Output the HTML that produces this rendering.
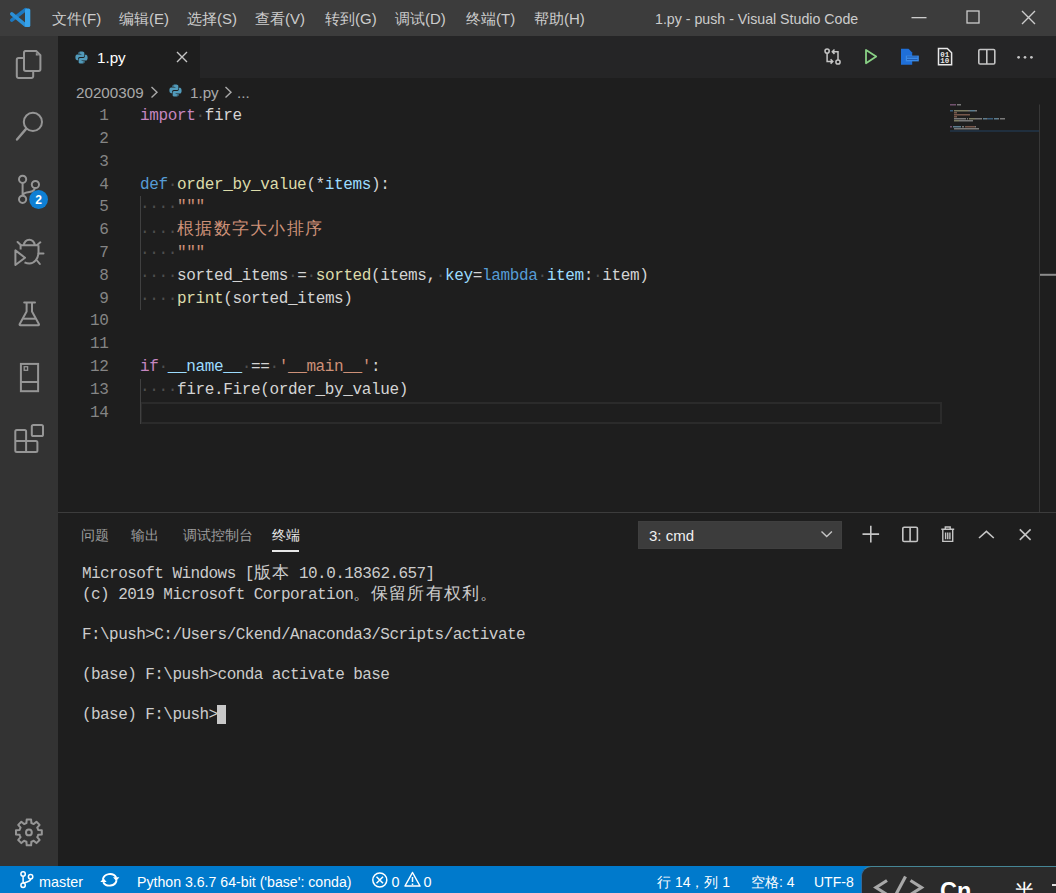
<!DOCTYPE html><html><head><meta charset="utf-8"><style>
*{margin:0;padding:0;box-sizing:border-box}
html,body{width:1056px;height:893px;overflow:hidden;background:#1e1e1e;font-family:"Liberation Sans",sans-serif}
div,span{position:absolute;white-space:pre}
span{position:static}
svg{position:absolute;overflow:visible}
.code{font-family:"Liberation Mono",monospace;font-size:16px;letter-spacing:-0.36px;line-height:22.8px;color:#d4d4d4;left:140px;height:22.8px}
.ln{font-family:"Liberation Mono",monospace;font-size:16px;letter-spacing:-0.36px;line-height:22.8px;color:#858585;text-align:right;left:58px;width:50.4px}
.term{font-family:"Liberation Mono",monospace;font-size:16px;letter-spacing:-0.56px;line-height:20.1px;color:#cccccc;left:82px}
.kw{color:#c586c0}.df{color:#569cd6}.fn{color:#dcdcaa}.st{color:#ce9178}.vr{color:#9cdcfe}.ws{color:#4e4e4e}.op{color:#d4d4d4}
.cj{font-family:"Liberation Sans",sans-serif;font-size:16.5px;letter-spacing:1.3px;position:relative;top:-2px}
.tcj{font-family:"Liberation Sans",sans-serif;font-size:16.5px;letter-spacing:1.08px;line-height:10px}
</style></head><body>
<div style="left:0;top:0;width:1056px;height:36px;background:#3c3c3c"></div>
<svg style="left:0;top:0" width="40" height="36">
<path d="M11.8 20.2 L25.5 9.6" stroke="#1c78c0" stroke-width="3.6" stroke-linecap="round"/>
<path d="M11.8 13.8 L25.5 25.2" stroke="#2b8fd6" stroke-width="3.6" stroke-linecap="round"/>
<rect x="25" y="8.4" width="5.3" height="18.7" rx="1.6" fill="#37a3ec"/>
</svg>
<div style="left:52px;top:8px;font-size:15px;line-height:22px;color:#cccccc">文件(F)</div>
<div style="left:119px;top:8px;font-size:15px;line-height:22px;color:#cccccc">编辑(E)</div>
<div style="left:187px;top:8px;font-size:15px;line-height:22px;color:#cccccc">选择(S)</div>
<div style="left:255px;top:8px;font-size:15px;line-height:22px;color:#cccccc">查看(V)</div>
<div style="left:325px;top:8px;font-size:15px;line-height:22px;color:#cccccc">转到(G)</div>
<div style="left:395px;top:8px;font-size:15px;line-height:22px;color:#cccccc">调试(D)</div>
<div style="left:466px;top:8px;font-size:15px;line-height:22px;color:#cccccc">终端(T)</div>
<div style="left:534px;top:8px;font-size:15px;line-height:22px;color:#cccccc">帮助(H)</div>
<div style="left:655px;top:8px;font-size:14.2px;line-height:22px;color:#cccccc">1.py - push - Visual Studio Code</div>
<svg style="left:911px;top:17px" width="16" height="2"><rect x="0.5" y="0" width="15" height="1.3" fill="#cccccc"/></svg>
<svg style="left:966px;top:10px" width="14" height="14"><rect x="1" y="1" width="12" height="12" fill="none" stroke="#cccccc" stroke-width="1.3"/></svg>
<svg style="left:1021px;top:10px" width="15" height="15"><path d="M1 1 14 14M14 1 1 14" stroke="#cccccc" stroke-width="1.4"/></svg>
<div style="left:0;top:36px;width:58px;height:830px;background:#333333"></div>
<svg style="left:0;top:0" width="58" height="500">
<path d="M25 51 H36.2 L40.4 55.2 V69.2 A1.8 1.8 0 0 1 38.6 71 H25.8 A1.8 1.8 0 0 1 24 69.2 V52.8 A1.8 1.8 0 0 1 25.8 51 Z" fill="none" stroke="#969696" stroke-width="2" stroke-linejoin="round"/>
<path d="M24 58 H18.6 A1.8 1.8 0 0 0 16.8 59.8 V76.2 A1.8 1.8 0 0 0 18.6 78 H31.4 A1.8 1.8 0 0 0 33.2 76.2 V71" fill="none" stroke="#969696" stroke-width="2" stroke-linejoin="round"/>
<path d="M35.8 52.5 V55.6 H39 Z" fill="#969696"/>
</svg>
<svg style="left:0;top:0" width="58" height="500">
<circle cx="32.9" cy="121.9" r="9.1" fill="none" stroke="#969696" stroke-width="2"/>
<path d="M26.3 128.6 L17 139.5" stroke="#969696" stroke-width="2.4" stroke-linecap="round"/>
</svg>
<svg style="left:0;top:0" width="58" height="500">
<circle cx="22.6" cy="179.3" r="3.6" fill="none" stroke="#969696" stroke-width="2"/>
<circle cx="35.4" cy="184.5" r="3.6" fill="none" stroke="#969696" stroke-width="2"/>
<circle cx="22.6" cy="199.3" r="3.6" fill="none" stroke="#969696" stroke-width="2"/>
<path d="M22.6 182.9 V195.7 M35 188.1 C34 191 32 192 28 192.2 C25 192.4 23.5 193 22.8 195.5" fill="none" stroke="#969696" stroke-width="2"/>
<circle cx="38.6" cy="199.5" r="9.4" fill="#0e7fd4"/>
<text x="38.6" y="204" font-family="Liberation Sans" font-weight="bold" font-size="12" fill="#ffffff" text-anchor="middle">2</text>
</svg>
<svg style="left:0;top:0" width="58" height="500">
<path d="M15.4 250.4 V265 L25 257.7 Z" fill="none" stroke="#969696" stroke-width="2" stroke-linejoin="round"/>
<path d="M24 245 A5.3 5.3 0 0 1 34.6 245" fill="none" stroke="#969696" stroke-width="2"/>
<path d="M19.8 245.2 H38.5 M20.6 245.2 V249.5 M38.5 245.2 V252 C38.5 259 34 263.5 29.5 263.5 C27.5 263.5 26 263 24.5 262.3" fill="none" stroke="#969696" stroke-width="2"/>
<path d="M17.6 242 L20.5 244.7 M40.3 242.3 L37.5 244.7 M38.5 253.4 H43.5 M37 260.5 L39.8 264" fill="none" stroke="#969696" stroke-width="2" stroke-linecap="round"/>
</svg>
<svg style="left:0;top:0" width="58" height="500">
<path d="M24.2 302.5 H35" stroke="#969696" stroke-width="2" stroke-linecap="round"/>
<path d="M26.6 302.5 V311.6 L19.6 324.2 A0.8 0.8 0 0 0 20.3 325.3 H38.3 A0.8 0.8 0 0 0 39 324.2 L32 311.6 V302.5" fill="none" stroke="#969696" stroke-width="2" stroke-linejoin="round"/>
<path d="M23.2 318.7 H35.6" stroke="#969696" stroke-width="2"/>
</svg>
<svg style="left:0;top:0" width="58" height="500">
<rect x="20.9" y="363.9" width="17.2" height="27.3" fill="none" stroke="#969696" stroke-width="2"/>
<path d="M20.9 382 H38.1" stroke="#969696" stroke-width="2"/>
<rect x="24.2" y="366.7" width="3.4" height="3.6" fill="none" stroke="#969696" stroke-width="1.3"/>
</svg>
<svg style="left:0;top:0" width="58" height="500">
<path d="M26.1 440.9 V431.4 A1.5 1.5 0 0 0 24.6 429.9 H16.8 A1.5 1.5 0 0 0 15.3 431.4 V450.5 A1.5 1.5 0 0 0 16.8 452 H35.9 A1.5 1.5 0 0 0 37.4 450.5 V442.4 A1.5 1.5 0 0 0 35.9 440.9 Z M15.3 440.9 H26.1 V452" fill="none" stroke="#969696" stroke-width="2" stroke-linejoin="round"/>
<rect x="31.8" y="424.9" width="11.2" height="11.1" rx="1.6" fill="none" stroke="#969696" stroke-width="2"/>
</svg>
<svg style="left:0;top:0" width="58" height="893">
<path d="M25.23 823.53 L26.43 823.12 L26.68 819.49 L31.12 819.49 L31.37 823.12 L32.57 823.53 L33.71 824.09 L36.46 821.70 L39.60 824.84 L37.21 827.59 L37.77 828.73 L38.18 829.93 L41.81 830.18 L41.81 834.62 L38.18 834.87 L37.77 836.07 L37.21 837.21 L39.60 839.96 L36.46 843.10 L33.71 840.71 L32.57 841.27 L31.37 841.68 L31.12 845.31 L26.68 845.31 L26.43 841.68 L25.23 841.27 L24.09 840.71 L21.34 843.10 L18.20 839.96 L20.59 837.21 L20.03 836.07 L19.62 834.87 L15.99 834.62 L15.99 830.18 L19.62 829.93 L20.03 828.73 L20.59 827.59 L18.20 824.84 L21.34 821.70 L24.09 824.09Z" fill="none" stroke="#969696" stroke-width="2" stroke-linejoin="round"/>
<circle cx="28.9" cy="832.4" r="2.9" fill="none" stroke="#969696" stroke-width="2"/>
</svg>
<div style="left:58px;top:36px;width:998px;height:42px;background:#252526"></div>
<div style="left:58px;top:36px;width:142px;height:42px;background:#1e1e1e"></div>
<svg style="left:75px;top:51px" width="13" height="13" viewBox="0 0 16 16">
<path fill="#519aba" d="M7.8 0.5c-3.7 0-3.5 1.6-3.5 1.6v1.7h3.6v0.5H2.9S0.5 4 0.5 7.8c0 3.7 2.1 3.6 2.1 3.6h1.3V9.6s-0.1-2.1 2.1-2.1h3.5s2 0 2-2V2.5S11.8 0.5 7.8 0.5zM5.8 1.7a0.65 0.65 0 1 1 0 1.3 0.65 0.65 0 0 1 0-1.3z"/>
<path fill="#519aba" d="M8.2 15.5c3.7 0 3.5-1.6 3.5-1.6v-1.7H8.1v-0.5h5S15.5 12 15.5 8.2c0-3.7-2.1-3.6-2.1-3.6h-1.3v1.8s0.1 2.1-2.1 2.1H6.5s-2 0-2 2v3.2S4.2 15.5 8.2 15.5zM10.2 14.3a0.65 0.65 0 1 1 0-1.3 0.65 0.65 0 0 1 0 1.3z"/>
</svg>
<div style="left:97px;top:47px;font-size:15.2px;line-height:22px;color:#ffffff">1.py</div>
<svg style="left:176px;top:51px" width="12" height="12"><path d="M1 1 11 11M11 1 1 11" stroke="#c5c5c5" stroke-width="1.4"/></svg>
<svg style="left:0;top:0" width="1056" height="80">
<g fill="none" stroke="#c5c5c5" stroke-width="1.5">
<circle cx="827.1" cy="51.1" r="2.1"/><circle cx="838" cy="62" r="2.1"/>
<path d="M827.1 53.2 V61.4 H832.6 M830.6 59.2 L832.8 61.4 L830.6 63.6"/>
<path d="M838 59.9 V51.7 H832.5 M834.5 49.5 L832.3 51.7 L834.5 53.9"/>
</g>
<path d="M866 49.9 L876.2 56.5 L866 63.2 Z" fill="none" stroke="#89d185" stroke-width="1.8" stroke-linejoin="round"/>
<path d="M901 48.7 H908.5 L912.2 52.4 V64.7 H901 Z" fill="#1f6fd8"/>
<rect x="905.8" y="55.6" width="13" height="5.8" fill="#3a8ae8"/>
<path d="M907 57 H917.5 M907 59.5 H917.5" stroke="#1a4fa0" stroke-width="0.8"/>
<path d="M938.5 48.4 H947.3 L951.6 52.7 V64.7 H938.5 Z" fill="none" stroke="#e8e8e8" stroke-width="1.5"/>
<text x="940.2" y="56.6" font-family="Liberation Mono" font-size="7.6" font-weight="bold" fill="#e8e8e8" textLength="9" lengthAdjust="spacingAndGlyphs">01</text>
<text x="940.2" y="62.6" font-family="Liberation Mono" font-size="7.6" font-weight="bold" fill="#e8e8e8" textLength="9" lengthAdjust="spacingAndGlyphs">10</text>
<rect x="978.8" y="49.5" width="16" height="14.5" rx="1.3" fill="none" stroke="#c5c5c5" stroke-width="1.6"/>
<path d="M986.8 49.5 V64" stroke="#c5c5c5" stroke-width="1.6"/>
<circle cx="1018.6" cy="57.3" r="1.35" fill="#c5c5c5"/><circle cx="1025" cy="57.3" r="1.35" fill="#c5c5c5"/><circle cx="1031.4" cy="57.3" r="1.35" fill="#c5c5c5"/>
</svg>
<div style="left:76px;top:81.5px;font-size:15.2px;line-height:22px;color:#a9a9a9">20200309</div>
<svg style="left:150px;top:86px" width="9" height="13"><path d="M1.5 1 L7 6.2 L1.5 11.5" fill="none" stroke="#a9a9a9" stroke-width="1.4"/></svg>
<svg style="left:169px;top:84px" width="13" height="13" viewBox="0 0 16 16">
<path fill="#519aba" d="M7.8 0.5c-3.7 0-3.5 1.6-3.5 1.6v1.7h3.6v0.5H2.9S0.5 4 0.5 7.8c0 3.7 2.1 3.6 2.1 3.6h1.3V9.6s-0.1-2.1 2.1-2.1h3.5s2 0 2-2V2.5S11.8 0.5 7.8 0.5zM5.8 1.7a0.65 0.65 0 1 1 0 1.3 0.65 0.65 0 0 1 0-1.3z"/>
<path fill="#519aba" d="M8.2 15.5c3.7 0 3.5-1.6 3.5-1.6v-1.7H8.1v-0.5h5S15.5 12 15.5 8.2c0-3.7-2.1-3.6-2.1-3.6h-1.3v1.8s0.1 2.1-2.1 2.1H6.5s-2 0-2 2v3.2S4.2 15.5 8.2 15.5zM10.2 14.3a0.65 0.65 0 1 1 0-1.3 0.65 0.65 0 0 1 0 1.3z"/>
</svg>
<div style="left:190px;top:81.5px;font-size:15.2px;line-height:22px;color:#a9a9a9">1.py</div>
<svg style="left:224px;top:86px" width="9" height="13"><path d="M1.5 1 L7 6.2 L1.5 11.5" fill="none" stroke="#a9a9a9" stroke-width="1.4"/></svg>
<div style="left:237px;top:81.5px;font-size:15.2px;line-height:22px;color:#a9a9a9">...</div>
<div style="left:140px;top:401.6px;width:802px;height:22.8px;border:2px solid #2b2b2b"></div>
<div style="left:140px;top:196.4px;width:1px;height:114.0px;background:#404040"></div>
<div style="left:140px;top:378.8px;width:1px;height:45.6px;background:#404040"></div>
<div class="ln" style="top:105.2px">1</div>
<div class="code" style="top:105.2px"><span class="kw">import</span><span class="ws">·</span>fire</div>
<div class="ln" style="top:128.0px">2</div>
<div class="ln" style="top:150.8px">3</div>
<div class="ln" style="top:173.6px">4</div>
<div class="code" style="top:173.6px"><span class="df">def</span><span class="ws">·</span><span class="fn">order_by_value</span>(*<span class="vr">items</span>):</div>
<div class="ln" style="top:196.4px">5</div>
<div class="code" style="top:196.4px"><span class="ws">·</span><span class="ws">·</span><span class="ws">·</span><span class="ws">·</span><span class="st">"""</span></div>
<div class="ln" style="top:219.2px">6</div>
<div class="code" style="top:219.2px"><span class="ws">·</span><span class="ws">·</span><span class="ws">·</span><span class="ws">·</span><span class="st cj">根据数字大小排序</span></div>
<div class="ln" style="top:242.0px">7</div>
<div class="code" style="top:242.0px"><span class="ws">·</span><span class="ws">·</span><span class="ws">·</span><span class="ws">·</span><span class="st">"""</span></div>
<div class="ln" style="top:264.8px">8</div>
<div class="code" style="top:264.8px"><span class="ws">·</span><span class="ws">·</span><span class="ws">·</span><span class="ws">·</span>sorted_items<span class="ws">·</span>=<span class="ws">·</span><span class="fn">sorted</span>(items,<span class="ws">·</span><span class="vr">key</span>=<span class="df">lambda</span><span class="ws">·</span><span class="vr">item</span>:<span class="ws">·</span>item)</div>
<div class="ln" style="top:287.6px">9</div>
<div class="code" style="top:287.6px"><span class="ws">·</span><span class="ws">·</span><span class="ws">·</span><span class="ws">·</span><span class="fn">print</span>(sorted_items)</div>
<div class="ln" style="top:310.4px">10</div>
<div class="ln" style="top:333.2px">11</div>
<div class="ln" style="top:356.0px">12</div>
<div class="code" style="top:356.0px"><span class="kw">if</span><span class="ws">·</span><span class="vr">__name__</span><span class="ws">·</span>==<span class="ws">·</span><span class="st">'__main__'</span>:</div>
<div class="ln" style="top:378.8px">13</div>
<div class="code" style="top:378.8px"><span class="ws">·</span><span class="ws">·</span><span class="ws">·</span><span class="ws">·</span>fire.Fire(order_by_value)</div>
<div class="ln" style="top:401.6px">14</div>
<svg style="left:0;top:0" width="1056" height="520"><rect x="950" y="130.2" width="89.5" height="1.6" fill="#264f78" opacity="0.45"/><g opacity="0.5"><rect x="950" y="104.0" width="6" height="1.5" fill="#c586c0"/><rect x="957" y="104.0" width="4" height="1.5" fill="#d4d4d4"/><rect x="950" y="110.0" width="3" height="1.5" fill="#569cd6"/><rect x="954" y="110.0" width="14" height="1.5" fill="#dcdcaa"/><rect x="968" y="110.0" width="2" height="1.5" fill="#d4d4d4"/><rect x="970" y="110.0" width="5" height="1.5" fill="#9cdcfe"/><rect x="975" y="110.0" width="2" height="1.5" fill="#d4d4d4"/><rect x="954" y="112.0" width="3" height="1.5" fill="#ce9178"/><rect x="954" y="114.0" width="16" height="1.5" fill="#ce9178"/><rect x="954" y="116.0" width="3" height="1.5" fill="#ce9178"/><rect x="954" y="118.0" width="12" height="1.5" fill="#d4d4d4"/><rect x="967" y="118.0" width="1" height="1.5" fill="#d4d4d4"/><rect x="969" y="118.0" width="6" height="1.5" fill="#dcdcaa"/><rect x="975" y="118.0" width="7" height="1.5" fill="#d4d4d4"/><rect x="983" y="118.0" width="3" height="1.5" fill="#9cdcfe"/><rect x="986" y="118.0" width="1" height="1.5" fill="#d4d4d4"/><rect x="987" y="118.0" width="6" height="1.5" fill="#569cd6"/><rect x="994" y="118.0" width="4" height="1.5" fill="#9cdcfe"/><rect x="998" y="118.0" width="1" height="1.5" fill="#d4d4d4"/><rect x="1000" y="118.0" width="5" height="1.5" fill="#d4d4d4"/><rect x="954" y="120.0" width="5" height="1.5" fill="#dcdcaa"/><rect x="959" y="120.0" width="14" height="1.5" fill="#d4d4d4"/><rect x="950" y="126.0" width="2" height="1.5" fill="#c586c0"/><rect x="953" y="126.0" width="8" height="1.5" fill="#9cdcfe"/><rect x="962" y="126.0" width="2" height="1.5" fill="#d4d4d4"/><rect x="965" y="126.0" width="10" height="1.5" fill="#ce9178"/><rect x="975" y="126.0" width="1" height="1.5" fill="#d4d4d4"/><rect x="954" y="128.0" width="9" height="1.5" fill="#d4d4d4"/><rect x="963" y="128.0" width="16" height="1.5" fill="#d4d4d4"/></g><rect x="1039" y="104.5" width="1" height="407.5" fill="#383838"/><rect x="1040" y="273.8" width="16" height="2" fill="#8c8c8c"/></svg>
<div style="left:58px;top:512px;width:998px;height:1px;background:#3c3c3c"></div>
<div style="left:81px;top:524.5px;font-size:14px;line-height:20px;color:#9d9d9d">问题</div>
<div style="left:131px;top:524.5px;font-size:14px;line-height:20px;color:#9d9d9d">输出</div>
<div style="left:183px;top:524.5px;font-size:14px;line-height:20px;color:#9d9d9d">调试控制台</div>
<div style="left:272px;top:524.5px;font-size:14px;line-height:20px;color:#e7e7e7">终端</div>
<div style="left:272px;top:550px;width:27px;height:1.5px;background:#e7e7e7"></div>
<div style="left:638px;top:521px;width:204px;height:28px;background:#3c3c3c;border:1px solid #3f3f3f"></div>
<div style="left:649px;top:524.5px;font-size:15px;line-height:22px;color:#f0f0f0">3: cmd</div>
<svg style="left:820px;top:529.5px" width="13" height="9"><path d="M1.5 1.5 L6.7 6.5 L11.9 1.5" fill="none" stroke="#c5c5c5" stroke-width="1.4"/></svg>
<svg style="left:0;top:0" width="1056" height="600">
<g fill="none" stroke="#c5c5c5" stroke-width="1.6">
<path d="M870.8 525.8 V542.4 M862.5 534.1 H879.1"/>
<rect x="902.8" y="527.3" width="14.6" height="14.2" rx="1.3"/>
<path d="M910.1 527.3 V541.5"/>
<path d="M941.3 529.3 H954.2 M945.3 529.3 V527 H950.2 V529.3 M942.8 530 V541.4 H952.7 V530 M945.6 532.5 V539.2 M947.75 532.5 V539.2 M949.9 532.5 V539.2" stroke-width="1.4"/>
<path d="M979 538 L986.4 531.3 L993.8 538"/>
<path d="M1019.8 529.4 L1030.6 539.8 M1030.6 529.4 L1019.8 539.8"/>
</g></svg>
<div class="term" style="top:564.4px">Microsoft Windows [<span class="tcj">版本</span> 10.0.18362.657]</div>
<div class="term" style="top:584.5px">(c) 2019 Microsoft Corporation<span class="tcj">。保留所有权利。</span></div>
<div class="term" style="top:624.7px">F:\push&gt;C:/Users/Ckend/Anaconda3/Scripts/activate</div>
<div class="term" style="top:664.9px">(base) F:\push&gt;conda activate base</div>
<div class="term" style="top:705.1px">(base) F:\push&gt;</div>
<div style="left:217px;top:704.5px;width:9px;height:19px;background:#c8c8c8"></div>
<div style="left:0;top:866px;width:1056px;height:27px;background:#007acc"></div>
<svg style="left:0;top:0" width="1056" height="893">
<g fill="none" stroke="#ffffff" stroke-width="1.5">
<circle cx="23.1" cy="874" r="2.2"/><circle cx="23.1" cy="885.3" r="2.2"/><circle cx="30.6" cy="876.8" r="2.2"/>
<path d="M23.1 876.2 V883.1 M30.6 879 C30.6 882 26 881.5 23.6 883.3"/>
<path d="M102.8 879.6 A7.2 6.6 0 0 1 116.3 877.6 M116.6 880.2 A7.2 6.6 0 0 1 103.2 882.2" stroke-width="1.9"/>
<path d="M113 877.2 H119.4 L116.2 881 Z M100.3 882 H106.7 L103.5 878.2 Z" fill="#ffffff" stroke="none"/>
<circle cx="379.8" cy="880" r="7"/>
<path d="M376.5 876.7 L383 883.3 M383 876.7 L376.5 883.3"/>
<path d="M412.5 872.5 L420 886 H405 Z" stroke-linejoin="round"/>
<path d="M412.5 877 V882 M412.5 883.5 V885"/>
</g></svg>
<div style="left:39px;top:870.5px;font-size:14.4px;line-height:22px;color:#ffffff">master</div>
<div style="left:137px;top:870.5px;font-size:14.15px;line-height:22px;color:#ffffff">Python 3.6.7 64-bit ('base': conda)</div>
<div style="left:391.5px;top:870.5px;font-size:14.4px;line-height:22px;color:#ffffff">0</div>
<div style="left:423.5px;top:870.5px;font-size:14.4px;line-height:22px;color:#ffffff">0</div>
<div style="left:657px;top:870.5px;font-size:14px;line-height:22px;color:#ffffff">行 14，列 1</div>
<div style="left:751px;top:870.5px;font-size:14px;line-height:22px;color:#ffffff">空格: 4</div>
<div style="left:814px;top:870.5px;font-size:14px;line-height:22px;color:#ffffff">UTF-8</div>
<div style="left:861.3px;top:866.2px;width:200px;height:40px;background:#2b2b2b;border-top:1.3px solid #468696;border-left:1.3px solid #2f6aa0;border-top-left-radius:10px"></div>
<svg style="left:0;top:0" width="1056" height="893">
<g fill="none" stroke="#a8a8a8" stroke-width="3.2" stroke-linejoin="miter">
<path d="M887 880.5 L876 887.5 L887 894.5"/>
<path d="M905.5 876.5 L893.5 899"/>
<path d="M910.5 880.5 L921.5 887.5 L910.5 894.5"/>
</g></svg>
<div style="left:940px;top:875.5px;font-size:23.5px;line-height:30px;color:#ffffff;font-weight:bold">Cn</div>
<div style="left:1014px;top:877px;font-size:21px;line-height:30px;color:#ffffff">半</div>
<div style="left:1052px;top:884px;width:4px;height:2px;background:#dddddd"></div>
</body></html>
